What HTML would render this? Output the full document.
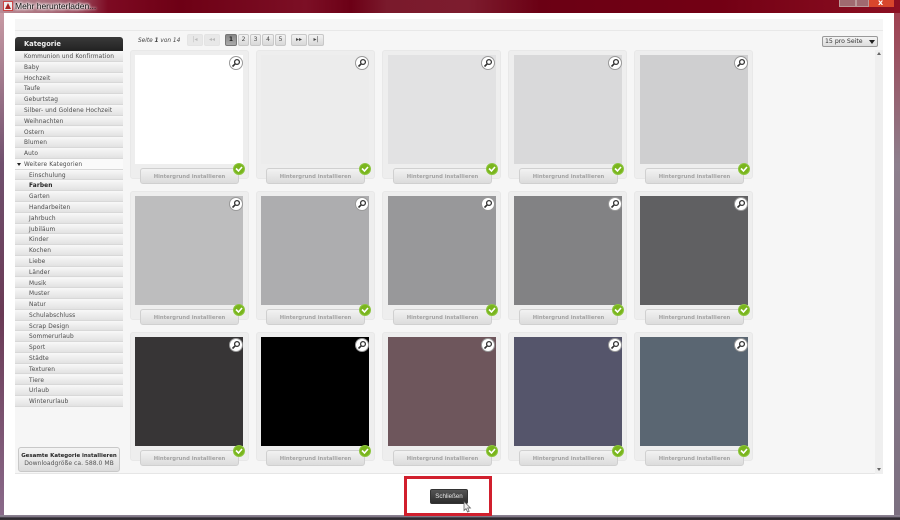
<!DOCTYPE html>
<html><head><meta charset="utf-8">
<style>
html,body{margin:0;padding:0}
body{width:900px;height:520px;overflow:hidden;position:relative;background:#fff;font-family:"DejaVu Sans","Liberation Sans",sans-serif;color:#444;filter:blur(.35px)}
div,span{position:absolute;box-sizing:border-box}
#tb{left:0;top:0;width:900px;height:13px;background:linear-gradient(90deg,#b88a94 0,#a86a78 6%,#9a4a5c 9%,#7d0a22 12%,#6e0015 20%,#7c0f25 34%,#6c0016 39%,#7a1a2c 43%,#7d1c2e 52%,#6b0014 60%,#730014 80%,#8c0f22 100%)}
#title{left:15px;top:1px;font:8.5px/11px "Liberation Sans",sans-serif;color:#111;white-space:nowrap;text-shadow:0 0 3px #fff,0 0 3px #fff,0 0 3px #fff,0 0 2px #fff}
.lb{left:0;top:13px;width:4px;height:503px;background:linear-gradient(#c89aa4,#70506e 30%,#6a3a55 60%,#8a6a8a)}
.rb{left:894px;top:13px;width:6px;height:503px;background:linear-gradient(#a04050,#8d7f8d 30%,#7c6f80)}
#bot{left:0;top:515px;width:900px;height:5px;background:linear-gradient(#8a8090 0,#8a8090 30%,#2c2830 60%,#3a3438)}
#panel{left:15px;top:19px;width:868px;height:455px;background:#f6f6f6;border-bottom:1px solid #e6e6e6}
#strip{left:15px;top:30px;width:868px;height:1px;background:#e8e8e8}
#sb{left:875px;top:50px;width:8px;height:424px;background:#efefef}
.sh{left:15px;top:37px;width:108px;height:14px;background:linear-gradient(#3a3a3a,#222);border-radius:3px 3px 0 0;color:#f0f0f0;font:bold 6.7px/14px "DejaVu Sans",sans-serif;padding-left:9px}
.i{left:15px;width:108px;height:10.8px;background:linear-gradient(#f8f8f8,#e2e2e2);border-bottom:1px solid #d8d8d8;font-size:5.85px;line-height:12.5px;padding-left:9px;letter-spacing:.12px;white-space:nowrap;color:#4a4a4a}
.s{padding-left:14px}
.all{left:18px;top:447px;width:102px;height:25px;background:linear-gradient(#f4f4f4,#dcdcdc);border:1px solid #c8c8c8;border-radius:3px;text-align:center;font-size:6.1px;line-height:8.5px;padding-top:3.5px;white-space:nowrap;color:#555}
.all b{color:#222;font-size:5.45px}
.pg{font-size:5.8px;line-height:9px;left:138px;top:37px;font-style:italic;white-space:nowrap;color:#444}
.b{top:34px;height:12px;background:linear-gradient(#f2f2f2,#d8d8d8);border:1px solid #c8c8c8;border-radius:2px;font-size:6px;line-height:10px;text-align:center;color:#444}
.d{background:#e8e8e8;color:#bbb;border-color:#e4e4e4}
.a{background:linear-gradient(#888,#aaa);border-color:#777;color:#222;font-weight:bold}
.sel{left:822px;top:36px;width:56px;height:11px;background:linear-gradient(#f4f4f4,#ddd);border:1px solid #999;border-radius:2px;font-size:6.2px;line-height:10px;padding-left:2px;white-space:nowrap;color:#333}
.sel i{position:absolute;right:2px;top:3px;border:3px solid transparent;border-top:4px solid #222;border-bottom:0}
.c{width:119px;height:129px;background:#eee;border:1px solid #e8e8e8;border-radius:3px}
.p{width:108px;height:108.5px}
.z{width:14px;height:14px;border-radius:50%;background:#fff;border:1px solid #999}
.z svg{position:absolute;left:1px;top:1px}
.n{width:99px;height:16px;background:linear-gradient(#f2f2f2,#dcdcdc);border:1px solid #d0d0d0;border-radius:3px;text-align:center;font-weight:bold;font-size:5.25px;line-height:16.5px;color:#a2a2a2;white-space:nowrap}
.k{width:12px;height:12px;border-radius:50%;background:#7ab51d;border:1px solid #8cc63f}
.k svg{position:absolute;left:1px;top:1px}
#red{left:404px;top:476px;width:88px;height:40px;border:3px solid #d11f2d}
#close{left:430px;top:489px;width:38px;height:15px;background:linear-gradient(#555,#2c2c2c);border-radius:2px;border:1px solid #333;color:#e8e8e8;font:6.2px/13px "Liberation Sans",sans-serif;text-align:center}
</style></head><body>
<svg width="0" height="0" style="position:absolute"><defs>
<symbol id="m" viewBox="0 0 10 10"><circle cx="6" cy="4" r="2.4" fill="none" stroke="#333" stroke-width="1.3"/><path d="M4.2 5.8L1.5 8.5" stroke="#333" stroke-width="1.6"/></symbol>
<symbol id="v" viewBox="0 0 8 8"><path d="M1 3.5L3.5 6L7 2" fill="none" stroke="#fff" stroke-width="1.6"/></symbol>
</defs></svg>
<div id="tb"></div>
<div style="left:3px;top:1px;width:10px;height:10px;background:#eee;border:1px solid #c44"></div>
<div style="left:5px;top:3px;width:0;height:0;border-left:3px solid transparent;border-right:3px solid transparent;border-bottom:6px solid #a22"></div>
<div id="title">Mehr herunterladen...</div>
<div style="left:839px;top:0;width:17px;height:7px;background:#a06a70;border:1px solid #b99;border-top:0"></div>
<div style="left:856px;top:0;width:13px;height:7px;background:#a06a70;border:1px solid #b99;border-top:0"></div>
<div style="left:869px;top:0;width:25px;height:7px;background:#d8462c"></div>
<div style="left:878px;top:-2px;font-size:8px;line-height:9px;color:#fff;font-weight:bold">x</div>
<div class="lb"></div><div class="rb"></div><div id="bot"></div>
<div id="panel"></div><div id="strip"></div><div id="sb"></div>
<div style="left:877px;top:52px;width:0;height:0;border:2px solid transparent;border-bottom:3px solid #666;border-top:0"></div>
<div style="left:877px;top:468px;width:0;height:0;border:2px solid transparent;border-top:3px solid #666;border-bottom:0"></div>

<div class="sh">Kategorie</div>
<div class="i" style="top:51px">Kommunion und Konfirmation</div>
<div class="i" style="top:61.8px">Baby</div>
<div class="i" style="top:72.6px">Hochzeit</div>
<div class="i" style="top:83.4px">Taufe</div>
<div class="i" style="top:94.2px">Geburtstag</div>
<div class="i" style="top:105px">Silber- und Goldene Hochzeit</div>
<div class="i" style="top:115.7px">Weihnachten</div>
<div class="i" style="top:126.5px">Ostern</div>
<div class="i" style="top:137.3px">Blumen</div>
<div class="i" style="top:148.1px">Auto</div>
<div class="i" style="top:158.9px;background:#fafafa">Weitere Kategorien</div>
<div style="left:17px;top:163px;width:0;height:0;border-left:2.5px solid transparent;border-right:2.5px solid transparent;border-top:3.5px solid #222"></div>
<div class="i s" style="top:169.6px">Einschulung</div>
<div class="i s" style="top:180.4px;font-weight:bold;color:#222">Farben</div>
<div class="i s" style="top:191.2px">Garten</div>
<div class="i s" style="top:202px">Handarbeiten</div>
<div class="i s" style="top:212.8px">Jahrbuch</div>
<div class="i s" style="top:223.5px">Jubiläum</div>
<div class="i s" style="top:234.3px">Kinder</div>
<div class="i s" style="top:245.1px">Kochen</div>
<div class="i s" style="top:255.9px">Liebe</div>
<div class="i s" style="top:266.7px">Länder</div>
<div class="i s" style="top:277.5px">Musik</div>
<div class="i s" style="top:288.2px">Muster</div>
<div class="i s" style="top:299px">Natur</div>
<div class="i s" style="top:309.8px">Schulabschluss</div>
<div class="i s" style="top:320.6px">Scrap Design</div>
<div class="i s" style="top:331.4px">Sommerurlaub</div>
<div class="i s" style="top:342.2px">Sport</div>
<div class="i s" style="top:353px">Städte</div>
<div class="i s" style="top:363.7px">Texturen</div>
<div class="i s" style="top:374.5px">Tiere</div>
<div class="i s" style="top:385.3px">Urlaub</div>
<div class="i s" style="top:396.1px">Winterurlaub</div>
<div class="all"><b>Gesamte Kategorie installieren</b><br>Downloadgröße ca. 588.0 MB</div>

<div class="pg">Seite <b>1</b> von 14</div>
<div class="b d" style="left:187px;width:16px">|◂</div>
<div class="b d" style="left:204px;width:16px">◂◂</div>
<div class="b a" style="left:225px;width:12px">1</div>
<div class="b" style="left:238px;width:11px">2</div>
<div class="b" style="left:250px;width:11px">3</div>
<div class="b" style="left:262px;width:12px">4</div>
<div class="b" style="left:275px;width:11px">5</div>
<div class="b" style="left:291px;width:16px">▸▸</div>
<div class="b" style="left:308px;width:16px">▸|</div>
<div class="sel">15 pro Seite<i></i></div>

<div class="c" style="left:130px;top:50px"></div><div class="p" style="left:135px;top:55px;background:#fff"></div>
<div class="c" style="left:256px;top:50px"></div><div class="p" style="left:261px;top:55px;background:#ececec"></div>
<div class="c" style="left:382px;top:50px"></div><div class="p" style="left:388px;top:55px;background:#e2e2e3"></div>
<div class="c" style="left:508px;top:50px"></div><div class="p" style="left:514px;top:55px;background:#d9d9da"></div>
<div class="c" style="left:634px;top:50px"></div><div class="p" style="left:640px;top:55px;background:#cfcfd0"></div>
<div class="c" style="left:130px;top:191px"></div><div class="p" style="left:135px;top:196px;background:#bdbdbe"></div>
<div class="c" style="left:256px;top:191px"></div><div class="p" style="left:261px;top:196px;background:#adadaf"></div>
<div class="c" style="left:382px;top:191px"></div><div class="p" style="left:388px;top:196px;background:#98989a"></div>
<div class="c" style="left:508px;top:191px"></div><div class="p" style="left:514px;top:196px;background:#828284"></div>
<div class="c" style="left:634px;top:191px"></div><div class="p" style="left:640px;top:196px;background:#606062"></div>
<div class="c" style="left:130px;top:332px"></div><div class="p" style="left:135px;top:337px;background:#373536"></div>
<div class="c" style="left:256px;top:332px"></div><div class="p" style="left:261px;top:337px;background:#000"></div>
<div class="c" style="left:382px;top:332px"></div><div class="p" style="left:388px;top:337px;background:#6e565c"></div>
<div class="c" style="left:508px;top:332px"></div><div class="p" style="left:514px;top:337px;background:#55556b"></div>
<div class="c" style="left:634px;top:332px"></div><div class="p" style="left:640px;top:337px;background:#5a6672"></div>

<div class="z" style="left:229px;top:56px"><svg width="10" height="10"><use href="#m"/></svg></div>
<div class="z" style="left:355px;top:56px"><svg width="10" height="10"><use href="#m"/></svg></div>
<div class="z" style="left:481px;top:56px"><svg width="10" height="10"><use href="#m"/></svg></div>
<div class="z" style="left:608px;top:56px"><svg width="10" height="10"><use href="#m"/></svg></div>
<div class="z" style="left:734px;top:56px"><svg width="10" height="10"><use href="#m"/></svg></div>
<div class="z" style="left:229px;top:197px"><svg width="10" height="10"><use href="#m"/></svg></div>
<div class="z" style="left:355px;top:197px"><svg width="10" height="10"><use href="#m"/></svg></div>
<div class="z" style="left:481px;top:197px"><svg width="10" height="10"><use href="#m"/></svg></div>
<div class="z" style="left:608px;top:197px"><svg width="10" height="10"><use href="#m"/></svg></div>
<div class="z" style="left:734px;top:197px"><svg width="10" height="10"><use href="#m"/></svg></div>
<div class="z" style="left:229px;top:338px"><svg width="10" height="10"><use href="#m"/></svg></div>
<div class="z" style="left:355px;top:338px"><svg width="10" height="10"><use href="#m"/></svg></div>
<div class="z" style="left:481px;top:338px"><svg width="10" height="10"><use href="#m"/></svg></div>
<div class="z" style="left:608px;top:338px"><svg width="10" height="10"><use href="#m"/></svg></div>
<div class="z" style="left:734px;top:338px"><svg width="10" height="10"><use href="#m"/></svg></div>

<div class="n" style="left:140px;top:168px">Hintergrund installieren</div>
<div class="n" style="left:266px;top:168px">Hintergrund installieren</div>
<div class="n" style="left:393px;top:168px">Hintergrund installieren</div>
<div class="n" style="left:519px;top:168px">Hintergrund installieren</div>
<div class="n" style="left:645px;top:168px">Hintergrund installieren</div>
<div class="n" style="left:140px;top:309px">Hintergrund installieren</div>
<div class="n" style="left:266px;top:309px">Hintergrund installieren</div>
<div class="n" style="left:393px;top:309px">Hintergrund installieren</div>
<div class="n" style="left:519px;top:309px">Hintergrund installieren</div>
<div class="n" style="left:645px;top:309px">Hintergrund installieren</div>
<div class="n" style="left:140px;top:450px">Hintergrund installieren</div>
<div class="n" style="left:266px;top:450px">Hintergrund installieren</div>
<div class="n" style="left:393px;top:450px">Hintergrund installieren</div>
<div class="n" style="left:519px;top:450px">Hintergrund installieren</div>
<div class="n" style="left:645px;top:450px">Hintergrund installieren</div>

<div class="k" style="left:233px;top:163px"><svg width="8" height="8"><use href="#v"/></svg></div>
<div class="k" style="left:359px;top:163px"><svg width="8" height="8"><use href="#v"/></svg></div>
<div class="k" style="left:486px;top:163px"><svg width="8" height="8"><use href="#v"/></svg></div>
<div class="k" style="left:612px;top:163px"><svg width="8" height="8"><use href="#v"/></svg></div>
<div class="k" style="left:738px;top:163px"><svg width="8" height="8"><use href="#v"/></svg></div>
<div class="k" style="left:233px;top:304px"><svg width="8" height="8"><use href="#v"/></svg></div>
<div class="k" style="left:359px;top:304px"><svg width="8" height="8"><use href="#v"/></svg></div>
<div class="k" style="left:486px;top:304px"><svg width="8" height="8"><use href="#v"/></svg></div>
<div class="k" style="left:612px;top:304px"><svg width="8" height="8"><use href="#v"/></svg></div>
<div class="k" style="left:738px;top:304px"><svg width="8" height="8"><use href="#v"/></svg></div>
<div class="k" style="left:233px;top:445px"><svg width="8" height="8"><use href="#v"/></svg></div>
<div class="k" style="left:359px;top:445px"><svg width="8" height="8"><use href="#v"/></svg></div>
<div class="k" style="left:486px;top:445px"><svg width="8" height="8"><use href="#v"/></svg></div>
<div class="k" style="left:612px;top:445px"><svg width="8" height="8"><use href="#v"/></svg></div>
<div class="k" style="left:738px;top:445px"><svg width="8" height="8"><use href="#v"/></svg></div>

<div id="red"></div>
<div id="close">Schließen</div>
<svg style="position:absolute;left:463px;top:501px" width="9" height="12" viewBox="0 0 9 12"><path d="M1 0.5V9.5L3 7.6L4.6 11L6.2 10.3L4.7 7H7.5Z" fill="#eee" stroke="#555" stroke-width=".7"/></svg>
</body></html>
